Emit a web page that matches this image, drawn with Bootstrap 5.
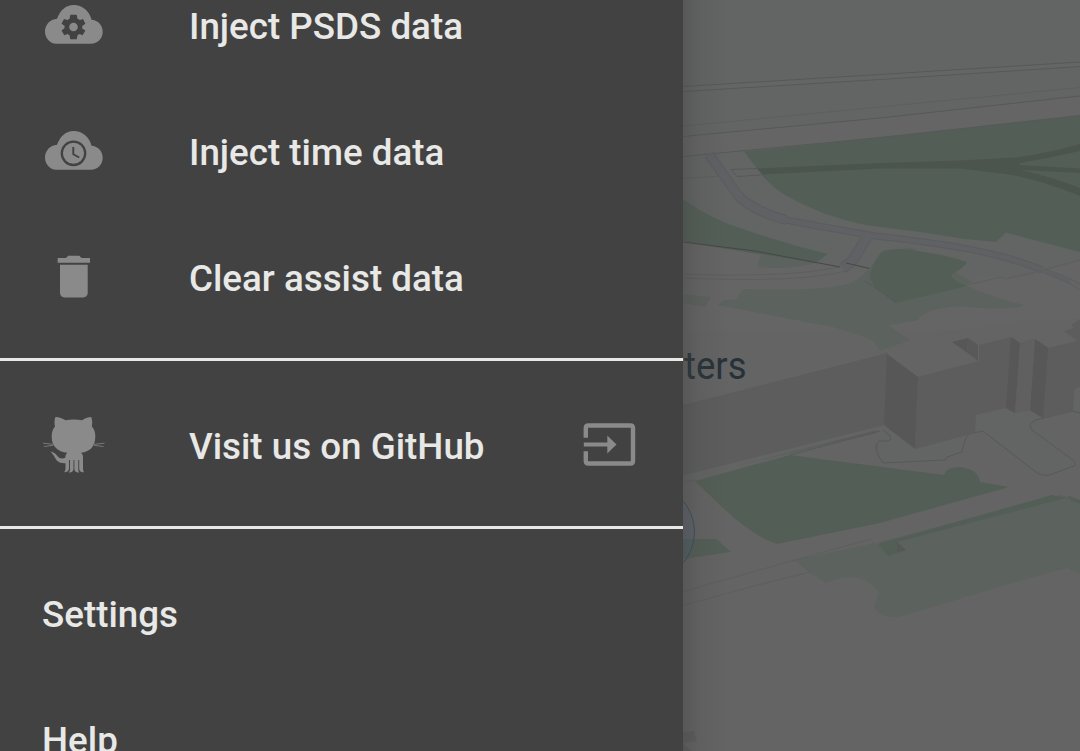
<!DOCTYPE html>
<html lang="en">
<head>
<meta charset="utf-8">
<meta name="viewport" content="width=device-width, initial-scale=1">
<title>Navigation drawer</title>
<link href="https://cdn.jsdelivr.net/npm/bootstrap@5.3.0/dist/css/bootstrap.min.css" rel="stylesheet">
<script src="https://cdn.jsdelivr.net/npm/bootstrap@5.3.0/dist/js/bootstrap.bundle.min.js"></script>
<style>
body{font-family:Roboto,"Liberation Sans",sans-serif;background:#646464}
.screen{height:751px}
.drawer{width:683px;background:#424242;color:#e8e8e6}
.drawer ul{margin-top:-37px}
.entry,.entry:hover{color:inherit}
.entry{height:126px;padding:2px 42px 0;font-size:36.75px;font-weight:500;line-height:1;white-space:nowrap}
.glyph{width:64px;height:64px;margin-right:83px;fill:#8a8a8a;flex:none}
.leave{width:64px;height:64px;fill:none;stroke:#8a8a8a;flex:none}
.rule{height:3px;background:#e8e8e6}
.gap-a{margin:17px 0 22px}
.gap-b{margin:17px 0 22px}
.map{min-width:0}
.park{fill:#535f56}.lawn{fill:#5c625e}.zone{fill:#636564}.pave{fill:#656565}
.wall{fill:#5d5d5d}.shade{fill:#575757}.rail{fill:#4b554e}
.edge{fill:none;stroke:#575959;stroke-width:1}
.faint{fill:none;stroke:#5d5e5e;stroke-width:1}
</style>
</head>
<body>
<div class="screen d-flex overflow-hidden">
<nav class="drawer flex-shrink-0 overflow-hidden">
<ul class="list-unstyled mb-0">
<li><a href="#" class="entry d-flex align-items-center text-decoration-none">
<svg class="glyph" viewBox="42 -5 64 64"><path d="M56 43.8C50 43.8 45 38 45 31.5C45 24.5 50 19.5 57 18.7C60.2 10 66 4.9 73.5 4.9C82.500 4.900 89.800 11.200 91.500 19.800C98 20.200 102.700 25.500 102.700 31.800C102.700 38.500 97.600 43.800 91 43.800Z"/><path fill="#424242" d="M70.300 14.800H76.700L77.500 18.700L80 20.100L83 18.900L85.400 23.800L82.200 26L82.200 28.500L85.400 30.500L82.500 35.300L79.500 34L77.500 35.200L76.700 39.200H70.300L69.600 35.200L67.300 34L64.300 35.300L61.500 30.500L64.500 28.200L64.500 25.700L61.500 23.800L64 18.900L67.300 20L69.600 18.800Z"/><circle cx="73.500" cy="27" r="4.300"/></svg>
<span>Inject PSDS data</span></a></li>
<li><a href="#" class="entry d-flex align-items-center text-decoration-none">
<svg class="glyph" viewBox="42 -5 64 64"><path d="M56 43.800C50 43.800 45 38 45 31.500C45 24.500 50 19.500 57 18.700C60.200 10 66 4.900 73.500 4.900C82.500 4.900 89.800 11.200 91.500 19.800C98 20.200 102.700 25.500 102.700 31.800C102.700 38.500 97.600 43.800 91 43.800Z"/><g fill="none" stroke="#424242"><circle cx="73.500" cy="27.300" r="11.700" stroke-width="2.300"/><path d="M73.300 21V28.300L79.200 31.500" stroke-width="1.900"/></g></svg>
<span>Inject time data</span></a></li>
<li><a href="#" class="entry d-flex align-items-center text-decoration-none">
<svg class="glyph" viewBox="42 247 64 64"><path d="M57.700 258.100H66L68.200 255.800H79.300L81.600 258.100H90V262.800H57.700ZM60 264.700H87.700V293C87.700 295.600 85.700 297.400 83.200 297.400H64.500C62 297.400 60 295.600 60 293Z"/></svg>
<span>Clear assist data</span></a></li>
<li class="rule gap-a"></li>
<li><a href="#" class="entry d-flex align-items-center text-decoration-none">
<svg class="glyph" viewBox="42 415 64 64"><path d="M55.400 417C58.500 416.800 62.500 418.500 65.500 420.300Q74 418.600 82 420.300C85.500 418 88.500 417 91.200 417C92.500 420.500 92.400 424 91.800 426.300C94.500 429.500 95.500 433 95.300 437C95 446.500 90.500 451.500 81 452.800C83 454.500 83 456 83 459V468C83 470 83.400 471 84 472.300C80.300 472.300 79.300 471 79.200 468V460H78.300V469C78.300 471 78.800 471.800 79.200 472.500C75.500 472.500 74.400 471 74.400 468.500V460H73.500V468.500C73.500 471 72.300 472.500 68.700 472.500C69.700 471.400 70 470.500 70 469V460H69V468C69 471 67.500 472.200 64.200 472.300C65.200 470.700 65.500 469.800 65.500 468V463.200C59.500 463.500 57.200 461.800 55 457.800C53.500 455 52 453 50.300 451.500C54 452.200 56 454 57.600 456.200C59.500 458.500 62 459 65.300 457.800C65.500 455.500 66 454 67.300 452.800C57.500 451.500 52 446.500 51.700 437.500C51.500 433 52.500 429.500 55 426.500C54.300 423.500 54.200 420.500 55.400 417Z"/><path d="M43 443.200L53 444.300M44 446.500L53 445.300M94 444.300L104.500 443.200M94 445.300L103.500 446.500" stroke="#777" stroke-width="1"/></svg>
<span>Visit us on GitHub</span>
<svg class="leave ms-auto" viewBox="577 415 64 64"><path d="M585.800 437.700V428Q585.800 425.500 588.300 425.500H630.500Q633 425.500 633 428V461Q633 463.500 630.500 463.500H588.300Q585.800 463.500 585.800 461V451.300" stroke-width="4.400"/><path d="M583.800 444.500H609" stroke-width="4"/><path d="M607.300 435.500L616.500 444.500L607.300 453.500Z" fill="#8a8a8a" stroke="none"/></svg>
</a></li>
<li class="rule gap-b"></li>
<li><a href="#" class="entry d-flex align-items-center text-decoration-none">Settings</a></li>
<li><a href="#" class="entry d-flex align-items-center text-decoration-none">Help</a></li>
</ul>
</nav>
<main class="map flex-grow-1">
<svg class="d-block" width="397" height="751" viewBox="683 0 397 751">
<defs><linearGradient id="cast"><stop offset="0" stop-color="#424242" stop-opacity=".36"/><stop offset=".35" stop-color="#424242" stop-opacity=".14"/><stop offset="1" stop-color="#424242" stop-opacity="0"/></linearGradient></defs>
<rect x="683" width="397" height="751" fill="#646464"/>
<path class="zone" d="M683 0H1080V290L1040 270L960 283L872 268L683 242Z"/>
<path class="pave" d="M683 242L843 267L865 272L883 281L1030 276L1080 260V330H683Z"/>
<!-- main roads -->
<path fill="#656565" d="M683 86.500L880 74.500L1080 62V66.500L880 79.500L683 91.500Z"/>
<path class="edge" d="M683 86.500L880 74.500L1080 62M683 91.500L880 79.500L1080 66.500"/>
<path class="faint" d="M683 126L880 107L1080 87.500M683 178.500L720 176"/>
<path class="pave" d="M683 136.500L880 118L1080 96V115.500L880 137.500L683 156.500Z"/>
<!-- parks -->
<path class="park" d="M744 151.500L880 137.500L1080 115.500V252L1006 232.500L996 242L965 239L920 232L880 227C840 222 805 207 782 193C764 181 758 169 744 151.500Z"/>
<path class="rail" d="M757 168.500L880 163L960 160.500L1015 157.500Q1045 154 1080 144V151Q1050 158 1020 163V165L1080 168.500V173L1020 170Q1050 176 1080 188V196Q1035 178 1005 174L960 168.500L880 168.500L763 174.500Z"/>
<path class="edge" d="M683 136.500L880 118L1080 96M683 156.500L880 137.500L1080 115.500" stroke-width="1.500"/>
<path class="edge" d="M731 169.500L757 168.500M731 169.500L737 176.500L761 175"/>
<path class="park" d="M683 199Q712 220 743 229Q785 244 828 254L815 263L683 242Z"/>
<path class="lawn" d="M762 255L815 263Q792 270 758 267Q758 260 762 255Z"/>
<!-- side street -->
<g fill="none"><g stroke="#5b5c5d"><path d="M867 237L855 257Q850 264 843 268" stroke-width="11"/><path d="M709 154.500L737 194Q750 210 786 220" stroke-width="10"/><path d="M784 219.500Q800 223 875 236C940 243 1000 252 1042 270" stroke-width="7"/></g>
<g stroke="#606164"><path d="M709 154.500L737 194Q750 210 786 220" stroke-width="8"/><path d="M784 219.500Q800 223 875 236C940 243 1000 252 1042 270L1070 282" stroke-width="5"/><path d="M868 235L855 257Q850 264 843 268" stroke-width="9"/></g></g>
<path class="faint" d="M683 274Q790 278 839 267M683 278Q800 283 846 271"/>
<path d="M683 242L755 251L840 267M846 263L876 270" fill="none" stroke="#454847"/>
<path class="lawn" d="M743 289Q810 291 840 286C862 282 870 267 884 250L912 248L973 282L965 285Q990 297 1024 305Q1014 312 960 306Q925 308 918 320Q906 323 888 325L910 340L880 351L874 341Q855 333 833 327L718 305L724 300L736 299ZM683 294L711 297L705 307L683 303Z"/>
<path class="park" d="M882 252Q895 247 910 250Q940 253 967 262Q965 267 951 275Q953 281 967 286L896 303L876 289L870 278Q871 263 882 252Z"/>
<path class="edge" d="M865 281L882 292L896 303"/>
<path class="faint" d="M967 285L1002 277L1005 279L1040 271L1080 260M1035 270Q1060 276 1080 290M1044 269Q1065 275 1080 284"/>
<!-- long building -->
<path class="wall" d="M683 405L880 355L890 351V430L683 478Z"/>
<path class="zone" d="M683 475.500L885 425L976 415L1080 400V412L1031 424Q1028 430 1040 438L1074 463Q1073 469 1045 475L1037 473L983 431L967 435Q963 440 963 449L958 453L947 457L945 460L882 463L880 458L876 430L683 480Z"/>
<path class="edge" d="M790 455L880 431M876 444Q875 452 883 463L945 460L947 457L962 452Q964 439 969 434L983 431L1037 473Q1045 477 1052 474L1074 466Q1077 463 1073 460L1032 430Q1025 421 1044 418L1072 411L1080 413M883 430Q896 439 888 441H881Q876 440 877 449"/>
<path fill="#646464" d="M887 354L888 349L910 341L952 332L1010 322L1080 319V341L1056 348L1012 337L978 346V361L918 377Z"/>
<path class="wall" d="M918 377L979 361V345L1011 337L1020 343L1035 339L1048 348L1077 341L1073 411L1043 418L1030 410L1015 413L1006 408L976 415L975 433L915 449Z"/>
<path class="shade" d="M887 354L918 377L915 449L884 425ZM952 342L968 338L967 352L979 361ZM1011 337L1020 343L1015 413L1006 408ZM1035 339L1048 348L1043 418L1030 410Z"/>
<path fill="#595959" d="M968 338L978 345V361L967 352Z"/>
<path fill="#606060" d="M1020 343L1035 339L1030 410L1015 413Z"/>
<path class="wall" d="M1071 325L1080 319V387L1074 389L1077 341L1064 331L1074 328Z"/>
<!-- lower lawns -->
<path class="park" d="M695 481L790 455L944 475Q946 467 960 467Q978 469 980 482L1009 487L880 523L777 544Q754 537 722 507Z"/>
<path class="park" d="M683 539H716L731 552L683 559Z"/>
<path class="lawn" d="M795 560L880 542L1060 495L1080 501V574L1067 568L1020 581L899 617Q880 619 874 606L879 594Q873 579 851 577Q839 577 826 583L809 572Z"/>
<path class="park" d="M878 544L1052 495L1066 498L897 542L906 550L888 556ZM1066 495L1080 500V503L1074 502Z"/>
<path class="shade" d="M897 542L906 550L897 552Z"/>
<path class="faint" d="M683 482L695 480M683 591.500L795 560L870 539L880 549M683 605.500L750 587L810 572M1060 495L1076 502"/>
<circle cx="646" cy="532" r="48.500" fill="#4f657a" fill-opacity=".28" stroke="#384e63"/>
<path class="wall" d="M683 732L694 731L697 741L683 743ZM683 744L692 751H683Z"/>
<text x="684" y="379" font-size="39" textLength="62.500" lengthAdjust="spacingAndGlyphs" fill="#263238" stroke="#666" stroke-width="2" stroke-opacity=".5" paint-order="stroke">ters</text>
<rect x="683" width="46" height="751" fill="url(#cast)"/>
</svg>
</main>
</div>
</body>
</html>
